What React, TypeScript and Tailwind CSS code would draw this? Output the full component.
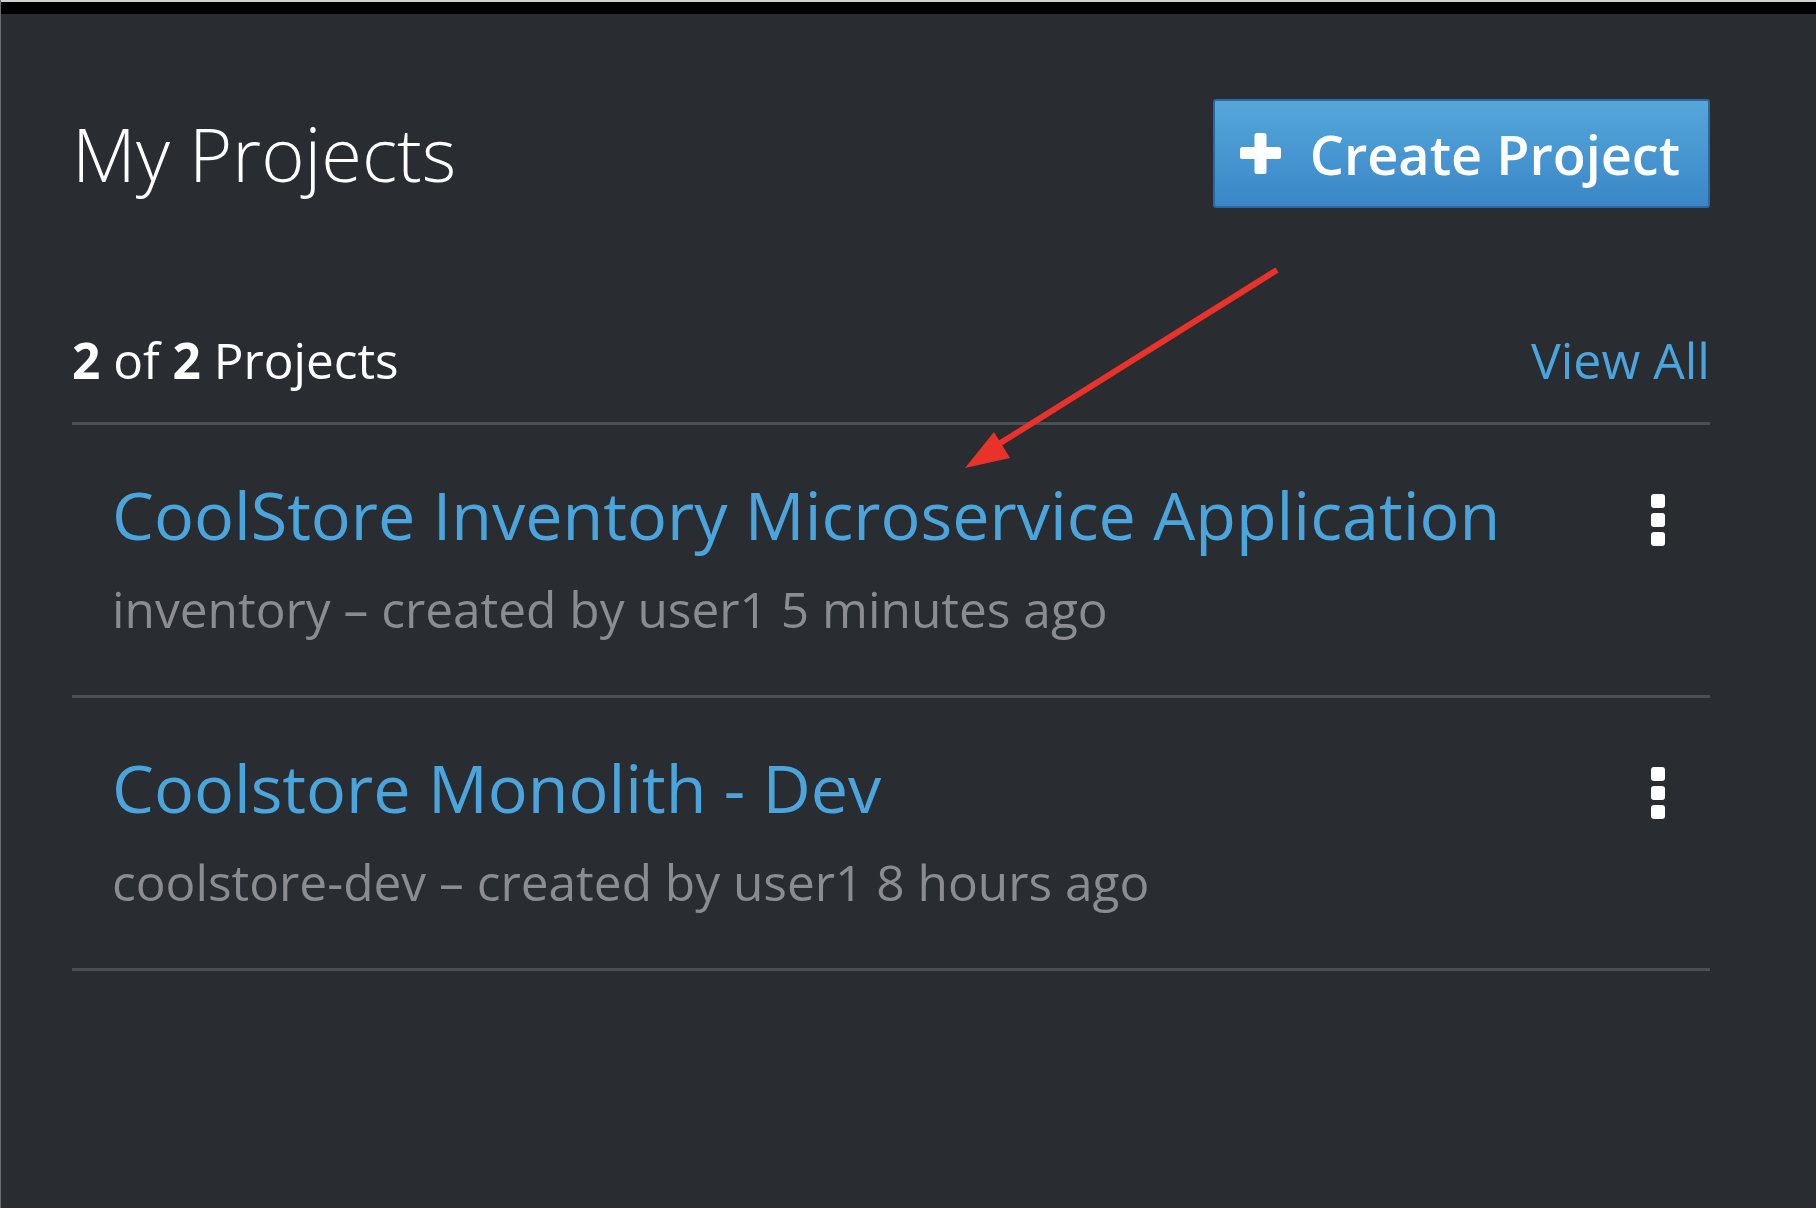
import React from "react";

const font = { fontFamily: '"Open Sans", "Noto Sans", "Liberation Sans", sans-serif' };

function Kebab() {
  return (
    <div className="flex flex-col gap-[5px] mt-[20px]">
      <div className="w-[14px] h-[14px] rounded-[3px] bg-white" />
      <div className="w-[14px] h-[14px] rounded-[3px] bg-white" />
      <div className="w-[14px] h-[14px] rounded-[3px] bg-white" />
    </div>
  );
}

function ProjectRow({ title, sub }: { title: string; sub: string }) {
  return (
    <div className="flex justify-between items-start pl-[40px] pr-[45px] pt-[49px] pb-[56px] border-b-[3px] border-[#4b4f55]">
      <div className="flex flex-col">
        <div className="text-[66.5px] leading-[80px] text-[#4ba5dd]">{title}</div>
        <div className="mt-[25px] text-[49.6px] leading-[60px] text-[#8a8c8f]">{sub}</div>
      </div>
      <Kebab />
    </div>
  );
}

export default function App() {
  return (
    <div className="relative w-[1816px] min-h-[1208px] bg-[#292c31] border-l border-[#6b6d70] overflow-hidden" style={font}>
      <div className="h-[14px] bg-black border-t-2 border-[#cfcfcf]" />
      <div className="ml-[71px] w-[1638px]">
        <div className="flex justify-between items-center pt-[85px]">
          <h1 className="text-[74px] leading-[90px] font-light text-white">My Projects</h1>
          <button className="h-[109px] flex items-center gap-[28px] pl-[24px] pr-[28px] rounded-[3px] border-2 border-[#2b68a0] bg-gradient-to-b from-[#55a7db] to-[#3a86c7] text-white">
            <svg width="43" height="43" viewBox="0 0 43 43">
              <rect x="15.5" y="1" width="12" height="41" rx="2.5" fill="white" />
              <rect x="1" y="15" width="41" height="12" rx="2.5" fill="white" />
            </svg>
            <span className="text-[54px] leading-[60px] font-semibold">Create Project</span>
          </button>
        </div>
        <div className="mt-[122px] flex justify-between items-baseline pb-[32px] border-b-[3px] border-[#4b4f55]">
          <div className="text-[49.5px] leading-[60px] text-white">
            <span className="font-bold">2</span> of <span className="font-bold">2</span> Projects
          </div>
          <a className="text-[50px] leading-[60px] text-[#4ba5dd]">View All</a>
        </div>
        <ProjectRow title="CoolStore Inventory Microservice Application" sub="inventory – created by user1 5 minutes ago" />
        <ProjectRow title="Coolstore Monolith - Dev" sub="coolstore-dev – created by user1 8 hours ago" />
      </div>
      <svg className="absolute left-0 top-0 pointer-events-none" width="1816" height="1208">
        <line x1="1276" y1="270" x2="985" y2="452" stroke="#e8322a" strokeWidth="6" />
        <polygon points="964,468 993,432 1009,458" fill="#e8322a" />
      </svg>
    </div>
  );
}
